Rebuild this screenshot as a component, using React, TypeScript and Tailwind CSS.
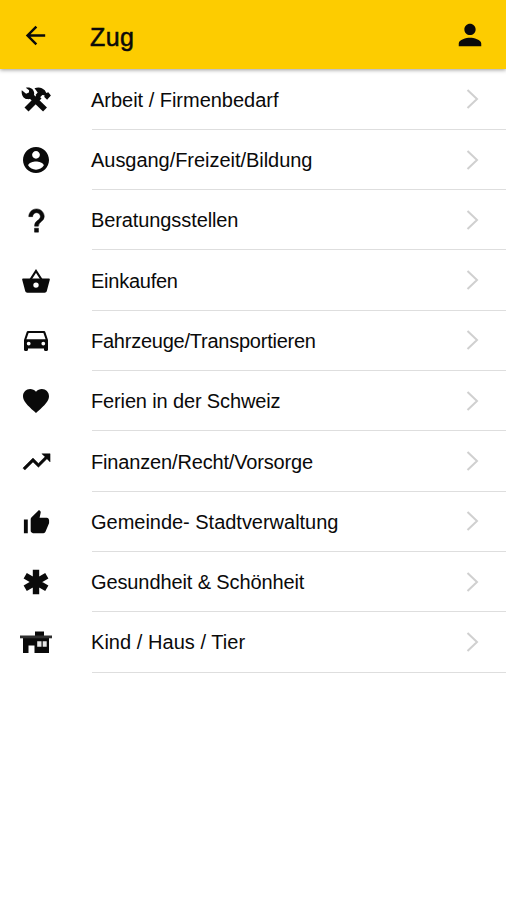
import type { ReactNode } from "react";
import {
  IoMdArrowBack,
  IoMdContact,
  IoMdHeart,
  IoMdHelp,
  IoMdPerson,
  IoMdThumbsUp,
  IoMdTrendingUp,
} from "react-icons/io";

function ToolsIcon() {
  return (
    <svg viewBox="0 0 30 25" className="h-[25px] w-[30px] shrink-0" fill="none" stroke="currentColor">
      {/* hammer */}
      <path d="M5.500 22.500L18.500 9.500" strokeWidth="5.600" />
      <path
        d="M13.500 1.200c4-1.600 7.600-.8 10.300 2.100l1.500 2.600 2-.6 2.600 3.200-3.800 4.300-2.800-2.700.2-1.800-2.200-.3-3.600 3.700-3.200-3.700 2.200-2.600z"
        fill="currentColor"
        stroke="none"
      />
      {/* wrench */}
      <path d="M8.500 7.500L24 22.500" strokeWidth="5.600" />
      <path
        d="M.8 3.200l4.300 3.600 2.800-1.200.2-2.400L4.800.8C9-.5 13 2 13.200 6.300c0 4-3.500 6.500-7.200 5.800C2.300 11.500 0 7.500.8 3.200z"
        fill="currentColor"
        stroke="none"
      />
    </svg>
  );
}

function BasketIcon() {
  return (
    <svg viewBox="0 0 28 24" className="h-6 w-7" fill="currentColor">
      <path d="M8.500 10.500L14 2l5.500 8.500" fill="none" stroke="currentColor" strokeWidth="2.200" />
      <path
        fillRule="evenodd"
        d="M1.200 9.500h25.600c.8 0 1.200.6 1 1.300l-3 11.300c-.3 1.100-1.100 1.700-2.200 1.700H5.400c-1.100 0-1.900-.6-2.200-1.700L.2 10.800c-.2-.7.200-1.300 1-1.300zM14 13.400a2.700 2.700 0 100 5.400 2.700 2.700 0 000-5.400z"
      />
    </svg>
  );
}

function CarIcon() {
  return (
    <svg viewBox="0 0 24 20" className="h-5 w-6" fill="currentColor">
      <path
        fillRule="evenodd"
        d="M4.500 0h15c1 0 1.700.5 2 1.400L24 9v9.800c0 .7-.5 1.200-1.200 1.200h-1.600c-.7 0-1.200-.5-1.200-1.200V17.500H4v1.300c0 .7-.5 1.200-1.200 1.200H1.200C.5 20 0 19.500 0 18.800V9l2.500-7.600C2.800.5 3.500 0 4.500 0zM4.600 1.900L2.400 8.300h19.200l-2.200-6.400zM4.700 10.700a1.900 1.900 0 100 3.800 1.900 1.900 0 000-3.800zM19.300 10.700a1.900 1.900 0 100 3.800 1.900 1.900 0 000-3.800z"
      />
    </svg>
  );
}

function MedicalIcon() {
  return (
    <svg viewBox="0 0 26 26" className="size-[26px]" stroke="currentColor" strokeWidth="6.400">
      <path d="M13 .8v24.400M2.200 6.800l21.600 12.400M23.800 6.800L2.200 19.200" />
    </svg>
  );
}

function HouseIcon() {
  return (
    <svg viewBox="0 0 34 24" className="h-6 w-[34px] shrink-0">
      <path fill="#0a0a0a" d="M16 1.500h9V6h-9zM4 8h26v15H15.500v-7.500h-6V23H4z" />
      <path fill="#2f2f2f" d="M1 5.500h32v2.800H1z" />
      <path fill="#e8e8e8" d="M18.200 11.200h4.300v5.500h-4.300zM23.700 11.200h4v5.500h-4z" />
    </svg>
  );
}

const categories: { label: string; icon: ReactNode; tracking: string }[] = [
  { label: "Arbeit / Firmenbedarf", icon: <ToolsIcon />, tracking: "tracking-[-0.02px]" },
  { label: "Ausgang/Freizeit/Bildung", icon: <IoMdContact size={32} />, tracking: "tracking-[-0.04px]" },
  { label: "Beratungsstellen", icon: <IoMdHelp size={31} stroke="currentColor" strokeWidth={8} />, tracking: "tracking-[-0.1px]" },
  { label: "Einkaufen", icon: <BasketIcon />, tracking: "tracking-[-0.25px]" },
  { label: "Fahrzeuge/Transportieren", icon: <CarIcon />, tracking: "tracking-[-0.24px]" },
  { label: "Ferien in der Schweiz", icon: <IoMdHeart size={32} />, tracking: "tracking-[-0.14px]" },
  { label: "Finanzen/Recht/Vorsorge", icon: <IoMdTrendingUp size={31} stroke="currentColor" strokeWidth={8} />, tracking: "tracking-[-0.16px]" },
  { label: "Gemeinde- Stadtverwaltung", icon: <IoMdThumbsUp size={31} />, tracking: "tracking-[-0.02px]" },
  { label: "Gesundheit & Schönheit", icon: <MedicalIcon />, tracking: "tracking-[-0.11px]" },
  { label: "Kind / Haus / Tier", icon: <HouseIcon />, tracking: "tracking-[0.04px]" },
];

export default function App() {
  return (
    <div className="min-h-screen bg-white font-['Liberation_Sans',Arial,sans-serif] text-[#0a0a0a]">
      <header className="relative flex h-[69px] items-center bg-[#fdcc00] shadow-[0_1px_4px_rgba(0,0,0,0.4)]">
        <button aria-label="Zurück" className="flex w-[90px] justify-center pt-px pr-[19px]">
          <IoMdArrowBack size={29} />
        </button>
        <h1 className="flex-1 pt-[4px] text-[25px] leading-8 tracking-[0.4px] [-webkit-text-stroke:0.5px_currentColor]">
          Zug
        </h1>
        <button aria-label="Profil" className="mr-[21px]">
          <IoMdPerson size={30} />
        </button>
      </header>

      <ul className="pt-[0.6px]">
        {categories.map(({ label, icon, tracking }) => (
          <li key={label} className="flex h-[60.3px] items-stretch">
            <div className="flex w-[72px] items-center justify-center">{icon}</div>
            <div className="ml-5 flex flex-1 items-center justify-between border-b border-[#dedede] pr-[27px]">
              <span className={`-ml-px pt-[1px] text-[20px] leading-7 ${tracking}`}>{label}</span>
              <svg viewBox="0 0 13 20" className="h-5 w-[13px]" fill="none" stroke="#d0d0d0" strokeWidth="2">
                <path d="M1.5 1l9.500 9-9.500 9" />
              </svg>
            </div>
          </li>
        ))}
      </ul>
    </div>
  );
}
